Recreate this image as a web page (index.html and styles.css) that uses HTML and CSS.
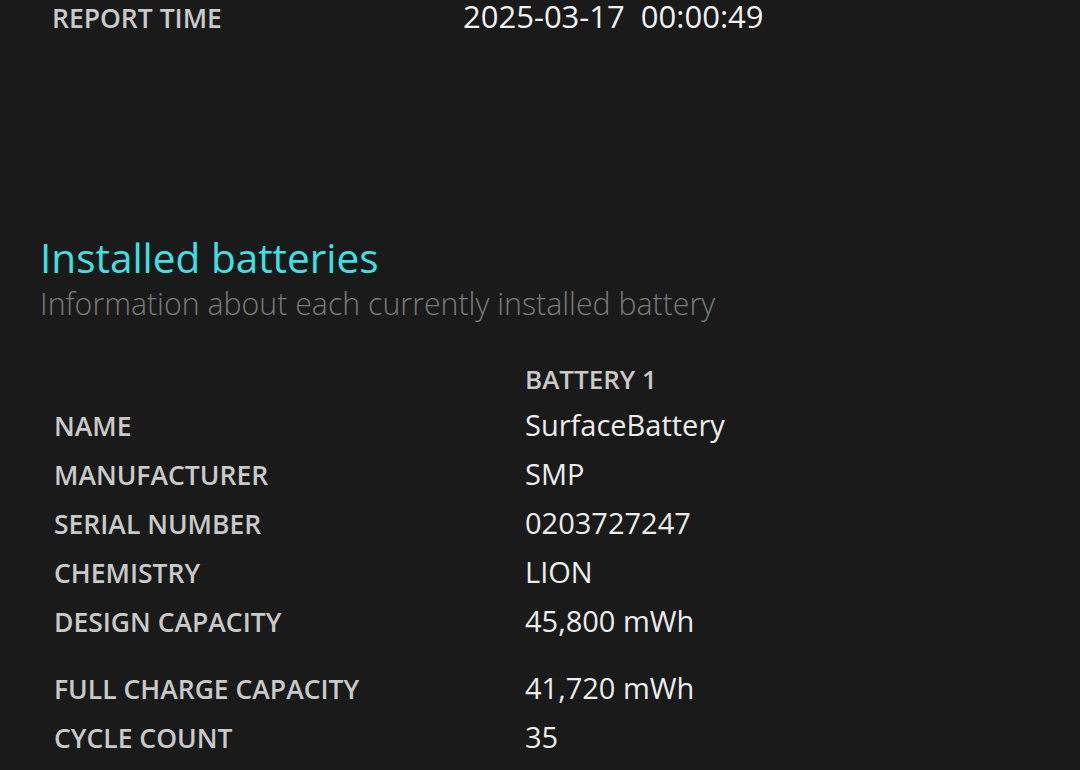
FILE: index.html
```html
<!DOCTYPE html>
<html>
  <head>
    <meta charset="utf-8">
    <title>Battery report</title>
    <link rel="stylesheet" href="styles.css">
  </head>
  <body>
    <!-- Report summary -->
    <table class="summary">
      <tr>
        <td class="label">REPORT TIME</td>
        <td class="date-value">2025-03-17&nbsp; 00:00:49</td>
      </tr>
    </table>

    <!-- Installed batteries -->
    <section class="batteries">
      <h2>Installed batteries</h2>
      <p class="subtitle">Information about each currently installed battery</p>

      <table class="battery-table">
        <thead>
          <tr>
            <td></td>
            <td class="col-head">BATTERY 1</td>
          </tr>
        </thead>
        <tbody>
          <tr><td class="label">NAME</td><td class="value">SurfaceBattery</td></tr>
          <tr><td class="label">MANUFACTURER</td><td class="value">SMP</td></tr>
          <tr><td class="label">SERIAL NUMBER</td><td class="value">0203727247</td></tr>
          <tr><td class="label">CHEMISTRY</td><td class="value">LION</td></tr>
          <tr><td class="label">DESIGN CAPACITY</td><td class="value">45,800 mWh</td></tr>
          <tr class="spacer"><td colspan="2"></td></tr>
          <tr><td class="label">FULL CHARGE CAPACITY</td><td class="value">41,720 mWh</td></tr>
          <tr><td class="label">CYCLE COUNT</td><td class="value">35</td></tr>
        </tbody>
      </table>
    </section>
  </body>
</html>
```

FILE: styles.css
```css
/* Dark battery report */
* {
  margin: 0;
  padding: 0;
  box-sizing: border-box;
}

body {
  font-family: "Open Sans", "Noto Sans", sans-serif;
  background-color: #1a1a1a;
  color: #e8e8e8;
  height: 770px;
  overflow: hidden;
}

table {
  border-collapse: collapse;
}
td {
  padding: 0;
  vertical-align: baseline;
}

.label {
  font-size: 26.5px;
  font-weight: 600;
  color: #c9c9c9;
  white-space: nowrap;
}

/* Report time row */
.summary {
  margin-left: 52px;
  margin-top: -5px;
}
.summary .label {
  width: 411px;
}
.date-value {
  font-size: 31px;
  color: #f0f0f0;
}

/* Section heading */
.batteries {
  padding: 0 0 0 40px;
  margin-top: 196px;
}
h2 {
  font-size: 40.5px;
  font-weight: 400;
  color: #3ee0e4;
  line-height: 50px;
}
.subtitle {
  font-size: 30.3px;
  font-weight: 300;
  color: #7a7a7a;
  line-height: 42px;
}

/* Battery table */
.battery-table {
  margin-top: 36px;
  margin-left: 14px;
}
.battery-table .label {
  width: 471px;
  height: 49px;
}
.col-head {
  font-size: 26px;
  font-weight: 600;
  color: #c9c9c9;
  height: 44px;
}
.value {
  font-size: 29px;
  color: #ececec;
}
.spacer td {
  height: 18px;
}
```
